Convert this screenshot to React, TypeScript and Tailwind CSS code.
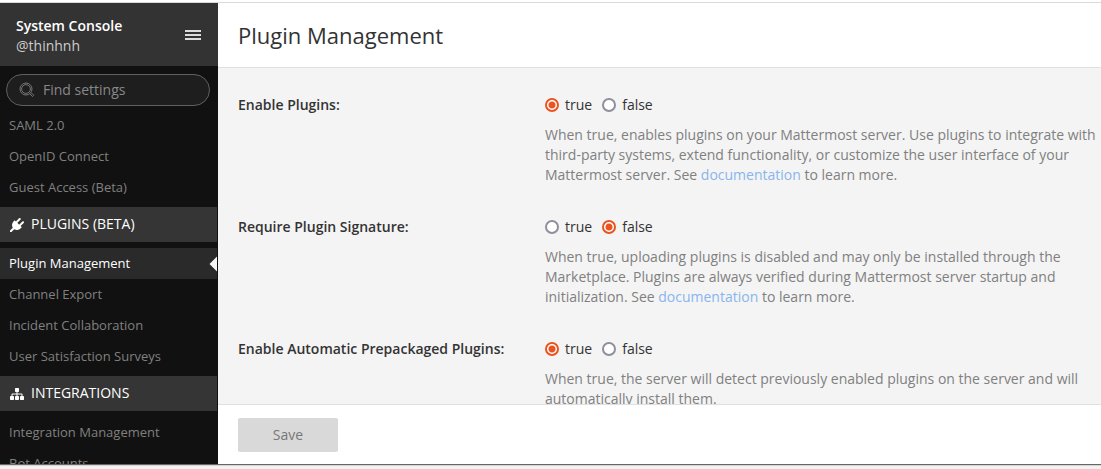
import { useState } from "react";
import type { ReactNode } from "react";

function PlugIcon() {
  return (
    <svg viewBox="0 0 1792 1792" className="mt-0.5 size-[14px] shrink-0" fill="currentColor" aria-hidden="true">
      <path d="M1755 453q37 38 37 90.5t-37 90.5l-401 400 150 150-160 160q-163 163-389.5 186.5t-411.5-100.5l-362 362h-181v-181l362-362q-124-185-100.5-411.5t186.5-389.5l160-160 150 150 400-401q38-37 91-37t90 37 37 90.5-37 90.5l-400 401 234 234 401-400q38-37 91-37t90 37z" />
    </svg>
  );
}

function SitemapIcon() {
  return (
    <svg viewBox="0 0 1792 1792" className="mt-0.5 size-[14px] shrink-0" fill="currentColor" aria-hidden="true">
      <path d="M1792 1248v320q0 40-28 68t-68 28h-320q-40 0-68-28t-28-68v-320q0-40 28-68t68-28h96v-192h-512v192h96q40 0 68 28t28 68v320q0 40-28 68t-68 28h-320q-40 0-68-28t-28-68v-320q0-40 28-68t68-28h96v-192h-512v192h96q40 0 68 28t28 68v320q0 40-28 68t-68 28h-320q-40 0-68-28t-28-68v-320q0-40 28-68t68-28h96v-192q0-52 38-90t90-38h512v-192h-96q-40 0-68-28t-28-68v-320q0-40 28-68t68-28h320q40 0 68 28t28 68v320q0 40-28 68t-68 28h-96v192h512q52 0 90 38t38 90v192h96q40 0 68 28t28 68z" />
    </svg>
  );
}

function SearchIcon() {
  return (
    <svg viewBox="0 0 16 16" className="size-4 shrink-0" fill="none" stroke="currentColor" aria-hidden="true">
      <circle cx="7" cy="7" r="6" />
      <circle cx="7" cy="7" r="4.4" />
      <path d="M10.8 11.8l2.700 2.700 1.200-1.200-2.700-2.700" />
    </svg>
  );
}

function NavList({ items, active }: { items: string[]; active?: string }) {
  return (
    <ul className="pb-1 text-[13px]">
      {items.map((item) => (
        <li key={item}>
          <a
            href="#"
            aria-current={item === active ? "page" : undefined}
            className={
              item === active
                ? "relative flex h-[31px] items-center bg-[#2a2a2a] pb-0.5 pl-[9px] text-white"
                : "flex h-[31px] items-center pb-0.5 pl-[9px] text-[#808080]"
            }
          >
            {item}
            {item === active && (
              <svg viewBox="0 0 9 16" className="absolute top-2 -right-px h-4 w-[9px]" fill="#f4f4f4" aria-hidden="true">
                <path d="M9 0.500H8L0.500 8 8 15.500H9z" />
              </svg>
            )}
          </a>
        </li>
      ))}
    </ul>
  );
}

function Section({ icon, title, items, active }: { icon: ReactNode; title: string; items: string[]; active?: string }) {
  return (
    <section>
      <h2 className="mb-1.5 flex h-[35px] items-center gap-[7px] bg-[#353535] pb-0.5 pl-[10px] text-sm text-white">
        {icon}
        {title}
      </h2>
      <NavList items={items} active={active} />
    </section>
  );
}

function Setting({ id, label, initial, children }: { id: string; label: string; initial: boolean; children: ReactNode }) {
  const [value, setValue] = useState(initial);
  return (
    <div role="radiogroup" aria-labelledby={id + "-label"} className="grid grid-cols-[307px_1fr]">
      <div id={id + "-label"} className="font-semibold">
        {label}
      </div>
      <div>
        <div className="flex gap-[10px]">
          {[true, false].map((option) => (
            <label key={String(option)} className="flex items-center gap-1.5">
              <input
                type="radio"
                name={id}
                checked={value === option}
                onChange={() => setValue(option)}
                className="size-[14px] appearance-none rounded-full border-2 border-[#8f8f9d] bg-white checked:border-[#e95420] checked:bg-[radial-gradient(circle,#e95420_3px,white_4px)]"
              />
              {String(option)}
            </label>
          ))}
        </div>
        <p className="mt-[10px] text-[#808080]">{children}</p>
      </div>
    </div>
  );
}

function DocLink() {
  return (
    <a href="#" className="text-[#89b4ee]">
      documentation
    </a>
  );
}

export default function App() {
  return (
    <div className="flex h-screen flex-col bg-[#f2f2f2] font-['Open_Sans',sans-serif] text-sm leading-5 text-[#333]">
      <div className="h-[3px] shrink-0 border-b border-[#d9d9d9] bg-white" />
      <div className="flex min-h-0 flex-1">
        <aside className="flex w-[218px] shrink-0 flex-col overflow-hidden bg-[#111]">
          <header className="flex h-[63px] shrink-0 items-center justify-between bg-[#333] pr-[17px] pl-4 text-white">
            <div className="pt-0.5">
              <div className="font-semibold">System Console</div>
              <div className="text-[#ccc]">@thinhnh</div>
            </div>
            <button type="button" aria-label="Menu" className="flex w-4 flex-col gap-0.5 text-[#ddd]">
              <span className="h-0.5 bg-current" />
              <span className="h-0.5 bg-current" />
              <span className="h-0.5 bg-current" />
            </button>
          </header>
          <div className="px-1.5 pt-2 pb-1">
            <label className="flex h-8 w-[204px] items-center gap-2 rounded-full border border-[#606060] bg-[#1e1e1e] pl-3 text-[#777]">
              <SearchIcon />
              <input
                type="search"
                aria-label="Find settings"
                placeholder="Find settings"
                className="min-w-0 flex-1 bg-transparent text-sm outline-none placeholder:text-[#888]"
              />
            </label>
          </div>
          <nav className="min-h-0 flex-1 overflow-hidden border-r border-[#111]">
            <NavList items={["SAML 2.0", "OpenID Connect", "Guest Access (Beta)"]} />
            <Section
              icon={<PlugIcon />}
              title="PLUGINS (BETA)"
              items={["Plugin Management", "Channel Export", "Incident Collaboration", "User Satisfaction Surveys"]}
              active="Plugin Management"
            />
            <Section icon={<SitemapIcon />} title="INTEGRATIONS" items={["Integration Management", "Bot Accounts"]} />
          </nav>
        </aside>
        <main className="flex min-w-0 flex-1 flex-col bg-[#f4f4f4]">
          <header className="flex h-[65px] shrink-0 items-center border-b border-[#e0e0e0] bg-white px-5">
            <h1 className="text-[22px]">Plugin Management</h1>
          </header>
          <form className="flex min-h-0 flex-1 flex-col">
            <div className="flex min-h-0 flex-1 flex-col gap-8 overflow-hidden pt-[27px] pl-5">
              <Setting id="enable" label="Enable Plugins:" initial={true}>
                When true, enables plugins on your Mattermost server. Use plugins to integrate with third-party systems,
                extend functionality, or customize the user interface of your Mattermost server. See <DocLink /> to learn
                more.
              </Setting>
              <Setting id="signature" label="Require Plugin Signature:" initial={false}>
                When true, uploading plugins is disabled and may only be installed through the Marketplace. Plugins are
                always verified during Mattermost server startup and initialization. See <DocLink /> to learn more.
              </Setting>
              <Setting id="prepackaged" label="Enable Automatic Prepackaged Plugins:" initial={true}>
                When true, the server will detect previously enabled plugins on the server and will automatically install
                them.
              </Setting>
            </div>
            <footer className="shrink-0 border-t border-[#e0e0e0] bg-white px-5 pt-[13px] pb-3">
              <button type="submit" disabled className="h-[34px] w-[100px] rounded-xs bg-[#d9d9d9] text-[#777]">
                Save
              </button>
            </footer>
          </form>
        </main>
      </div>
      <div className="h-[5px] shrink-0 border-t border-[#666]">
        <div className="h-px bg-[#d5d5d5]" />
      </div>
    </div>
  );
}
